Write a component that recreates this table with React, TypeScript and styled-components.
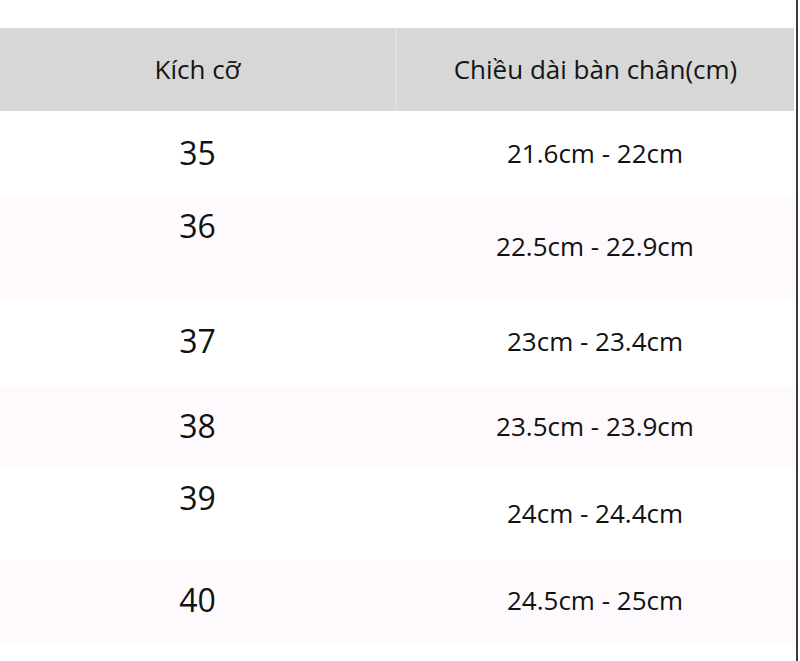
import React from 'react';
import styled, { createGlobalStyle } from 'styled-components';

const GlobalStyle = createGlobalStyle`
    html, body {
        margin: 0;
        padding: 0;
        background: #fff;
    }
    body {
        font-family: "Open Sans", "Noto Sans", "Liberation Sans", sans-serif;
        color: #111;
    }
`;

type SizeRow = {
    size: string;
    length: string;
    height: number;
    tint: boolean;
    raised?: boolean;
};

const rows: SizeRow[] = [
    { size: '35', length: '21.6cm - 22cm', height: 84, tint: false },
    { size: '36', length: '22.5cm - 22.9cm', height: 102, tint: true, raised: true },
    { size: '37', length: '23cm - 23.4cm', height: 89, tint: false },
    { size: '38', length: '23.5cm - 23.9cm', height: 81, tint: true },
    { size: '39', length: '24cm - 24.4cm', height: 92, tint: false, raised: true },
    { size: '40', length: '24.5cm - 25cm', height: 83, tint: true },
];

const App = () => {
    return (
        <>
            <GlobalStyle />
            <Page>
                <Table>
                    <HeaderRow>
                        <HeaderCell>Kích cỡ</HeaderCell>
                        <HeaderCell $divider>Chiều dài bàn chân(cm)</HeaderCell>
                    </HeaderRow>
                    {rows.map((row) => (
                        <Row key={row.size} $height={row.height} $tint={row.tint}>
                            <SizeCell $raised={row.raised}>{row.size}</SizeCell>
                            <LengthCell>{row.length}</LengthCell>
                        </Row>
                    ))}
                </Table>
            </Page>
        </>
    );
};

export default App;

const Page = styled.div`
    width: 798px;
    height: 661px;
    border-right: 2px solid #3a3a3a;
    padding-top: 28px;
    box-sizing: border-box;
    overflow: hidden;
`;

const Table = styled.div`
    display: flex;
    flex-direction: column;
`;

const HeaderRow = styled.div`
    display: grid;
    grid-template-columns: 395px 1fr;
    height: 83px;
    margin-right: 2px;
    margin-bottom: 1px;
    background: #d7d7d7;
`;

const HeaderCell = styled.div<{ $divider?: boolean }>`
    display: flex;
    align-items: center;
    justify-content: center;
    font-size: 26px;
    color: #151515;
    padding-bottom: 2px;
    border-left: ${(p) => (p.$divider ? '2px solid #dedede' : 'none')};
`;

const Row = styled.div<{ $height: number; $tint: boolean }>`
    display: grid;
    grid-template-columns: 395px 1fr;
    height: ${(p) => p.$height}px;
    margin-right: 1px;
    background: ${(p) => (p.$tint ? '#fdf9fc' : '#ffffff')};
`;

const SizeCell = styled.div<{ $raised?: boolean }>`
    display: flex;
    justify-content: center;
    align-items: ${(p) => (p.$raised ? 'flex-start' : 'center')};
    padding-top: ${(p) => (p.$raised ? '8px' : '0')};
    padding-bottom: ${(p) => (p.$raised ? '0' : '4px')};
    font-size: 32px;
    color: #111;
`;

const LengthCell = styled.div`
    display: flex;
    justify-content: center;
    align-items: center;
    padding-bottom: 3px;
    font-size: 26px;
    color: #111;
`;
